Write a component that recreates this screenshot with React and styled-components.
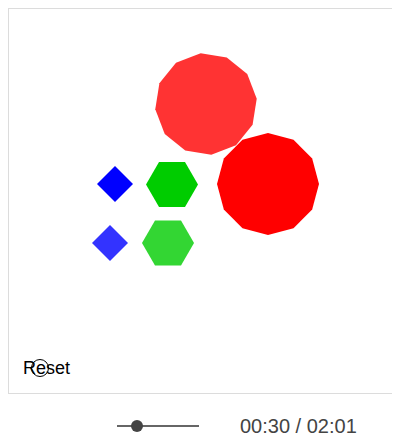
import React from 'react';
import styled, { createGlobalStyle } from 'styled-components';

const GlobalStyle = createGlobalStyle`
    body {
        margin: 8px 8px 0;
        background: #fff;
        font-family: "Liberation Sans", Arial, sans-serif;
    }
`;

const Player = styled.div`
    width: 386px;
    display: flex;
    flex-direction: column;
`;

const Panel = styled.div`
    box-sizing: border-box;
    height: 386px;
    border: 1px solid #dcdcdc;
    display: flex;
    flex-direction: column;
`;

const Stage = styled.svg`
    display: block;
    width: 384px;
    height: 340px;
    flex: none;
`;

const Footer = styled.div`
    display: flex;
    align-items: center;
    padding: 9px 0 0 14px;
`;

const ResetButton = styled.button`
    position: relative;
    border: none;
    background: none;
    padding: 0;
    margin: 0;
    font-family: "Liberation Sans", Arial, sans-serif;
    font-size: 18px;
    line-height: 20px;
    color: #000;
    cursor: pointer;

    &::after {
        content: '';
        position: absolute;
        left: 8px;
        top: 1px;
        width: 16px;
        height: 16px;
        border: 1px solid #000;
        border-radius: 50%;
    }
`;

const Controls = styled.div`
    height: 28px;
    display: flex;
    align-items: center;
    padding: 18px 0 0 109px;
    gap: 41px;
`;

const Track = styled.div`
    position: relative;
    width: 82px;
    height: 2px;
    background: #666;
`;

const Thumb = styled.div`
    position: absolute;
    top: 50%;
    width: 12px;
    height: 12px;
    margin: -6px 0 0 -6px;
    border-radius: 50%;
    background: #444;
`;

const Time = styled.span`
    font-size: 20px;
    color: #444;
    line-height: 24px;
`;

// regular polygon around (cx, cy), first vertex at angle a0 (degrees)
const poly = (cx, cy, r, n, a0) =>
    Array.from({ length: n }, (_, i) => {
        const a = ((a0 + (360 / n) * i) * Math.PI) / 180;
        return `${(cx + r * Math.cos(a)).toFixed(2)},${(cy + r * Math.sin(a)).toFixed(2)}`;
    }).join(' ');

const shapes = [
    { cx: 206, cy: 104, r: 51, n: 12, a0: -96, fill: '#ff3333' },
    { cx: 268, cy: 184, r: 51, n: 12, a0: -90, fill: '#ff0000' },
    { cx: 172, cy: 184.5, r: 26, n: 6, a0: 0, fill: '#00cc00' },
    { cx: 168, cy: 243, r: 26, n: 6, a0: 0, fill: '#33d633' },
    { cx: 115, cy: 184, r: 18, n: 4, a0: 0, fill: '#0000ff' },
    { cx: 110, cy: 243, r: 18, n: 4, a0: 0, fill: '#3333ff' },
];

class App extends React.Component {
    render() {
        const progress = 30 / 121;
        return (
            <Player>
                <GlobalStyle />
                <Panel>
                    <Stage viewBox="9 9 384 340">
                        {shapes.map((s, i) => (
                            <polygon key={i} points={poly(s.cx, s.cy, s.r, s.n, s.a0)} fill={s.fill} />
                        ))}
                    </Stage>
                    <Footer>
                        <ResetButton>Reset</ResetButton>
                    </Footer>
                </Panel>
                <Controls>
                    <Track>
                        <Thumb style={{ left: `${progress * 100}%` }} />
                    </Track>
                    <Time>00:30 / 02:01</Time>
                </Controls>
            </Player>
        );
    }
}

export default App;
